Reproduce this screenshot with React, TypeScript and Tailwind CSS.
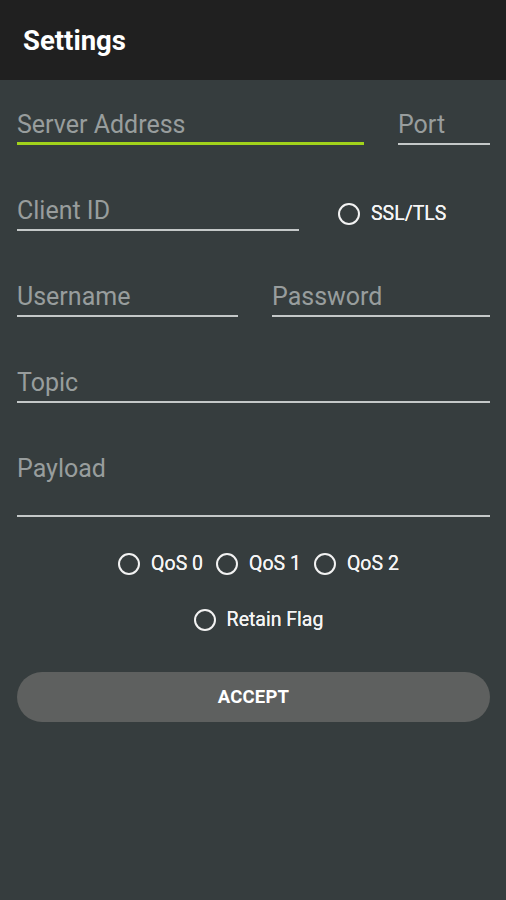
import React from "react";

const font = { fontFamily: "Roboto, 'Noto Sans', sans-serif" };

function Radio({ label, className = "" }: { label: string; className?: string }) {
  return (
    <div className={`flex items-center ${className}`}>
      <span className="w-[22px] h-[22px] rounded-full border-[2.5px] border-[#f2f2f2] box-border" />
      <span className="ml-[11px] text-[19.5px] leading-[24px] font-normal text-[#f4f4f4] [text-shadow:0_0_0.4px_#fff]">{label}</span>
    </div>
  );
}

function Field({ label, className = "", line = "border-[#c4c8c8]", pb = "pb-[3px]" }: { label: string; className?: string; line?: string; pb?: string }) {
  return (
    <div className={`${className} ${pb} border-b-2 ${line}`}>
      <div className="h-[30px] leading-[30px] text-[25px] text-[#989d9d]">{label}</div>
    </div>
  );
}

export default function App() {
  return (
    <div className="w-[506px] h-[900px] bg-[#363d3e] flex flex-col" style={font}>
      <div className="h-[80px] bg-[#202020] flex items-center px-[23px]">
        <span className="text-[27.5px] font-bold text-white leading-none mt-[2px]">Settings</span>
      </div>
      <div className="pl-[17px] pr-[16px] pt-[30px] flex flex-col">
        <div className="flex gap-[34px]">
          <div className="w-[347px] pb-[1px] border-b-[3px] border-[#a2d31b]">
            <div className="h-[30px] leading-[30px] text-[25px] text-[#989d9d]">Server Address</div>
          </div>
          <Field label="Port" className="flex-1" />
        </div>
        <div className="flex mt-[51px] items-start">
          <Field label="Client ID" className="w-[282px]" />
          <Radio label="SSL/TLS" className="ml-[39px] mt-[6px]" />
        </div>
        <div className="flex gap-[34px] mt-[51px]">
          <Field label="Username" className="w-[221px]" />
          <Field label="Password" className="flex-1" />
        </div>
        <Field label="Topic" className="mt-[51px]" />
        <Field label="Payload" className="mt-[51px]" pb="pb-[31px]" />
        <div className="flex justify-center mt-[35px] gap-[13px] pl-[10px]">
          <Radio label="QoS 0" />
          <Radio label="QoS 1" />
          <Radio label="QoS 2" />
        </div>
        <div className="flex justify-center mt-[32px] pl-[10px]">
          <Radio label="Retain Flag" />
        </div>
        <button className="mt-[40px] h-[50px] w-full rounded-full bg-[#5e605f] text-white font-bold text-[18.5px] tracking-[0.2px] pt-[2px]">
          ACCEPT
        </button>
      </div>
    </div>
  );
}
